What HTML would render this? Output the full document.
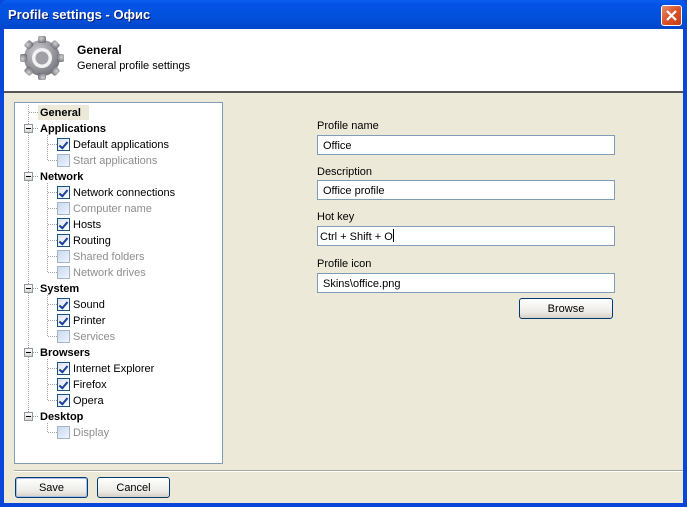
<!DOCTYPE html>
<html><head><meta charset="utf-8"><style>
*{margin:0;padding:0;box-sizing:border-box}
body{width:687px;height:507px;overflow:hidden;background:#0a46d8;font-family:"Liberation Sans",sans-serif;font-size:11px;color:#000;position:relative}
.abs{position:absolute}
#title{left:0;top:0;width:687px;height:29px;background:linear-gradient(#0a5fef,#0453e6 15%,#0350dc 60%,#0246c9);border-radius:7px 7px 0 0}
#title span{position:absolute;left:8px;top:7px;color:#fff;font-size:13px;font-weight:bold;text-shadow:1px 1px #0a1e6a}
#close{left:661px;top:5px;width:21px;height:21px;border:1px solid #fff;border-radius:3px;background:linear-gradient(135deg,#e88b6c,#d9532b 50%,#c43c14)}
#client{left:4px;top:29px;width:679px;height:474px;background:#ece9d8}
#hdr{left:4px;top:29px;width:679px;height:64px;background:#fff;border-bottom:2px solid #555}
.t{position:absolute;white-space:nowrap;line-height:14px;margin-top:1px}
.tree{left:14px;top:102px;width:209px;height:362px;background:#fff;border:1px solid #7f9db9}
.row{position:absolute;height:14px;line-height:14px;white-space:nowrap;margin-top:1px}
.b{font-weight:bold}
.g{color:#8d8d8d}
.exp{position:absolute;width:9px;height:9px;border:1px solid #8c99a8;background:linear-gradient(#fff,#dcd8cc)}
.exp:after{content:"";position:absolute;left:1px;top:3px;width:5px;height:1px;background:#000}
.cb{position:absolute;width:13px;height:13px;border:1px solid #1c5180;background:linear-gradient(135deg,#dce4ef,#fff)}
.cb.off{border-color:#a3b5c9;background:linear-gradient(135deg,#c8daf0,#eef4fb)}
.cb.on:after{content:"";position:absolute;left:3px;top:1px;width:3px;height:7px;border:solid #1c3f9c;border-width:0 2px 2px 0;transform:rotate(40deg)}
.dh{position:absolute;height:1px;border-top:1px dotted #a0a0a0}
.dv{position:absolute;width:1px;border-left:1px dotted #a0a0a0}
.in{position:absolute;left:317px;width:298px;height:20px;border:1px solid #7f9db9;background:#fff;padding-left:5px;padding-top:1px;line-height:18px;font-size:11px}
.btn{position:absolute;height:21px;border:1px solid #003c74;border-radius:3px;background:linear-gradient(#fff,#ecebe6 70%,#d6d0c5);text-align:center;line-height:21px}
</style></head><body>
<div id="title" class="abs"><span>Profile settings - Офис</span></div>
<div id="close" class="abs"><svg width="19" height="19"><path d="M5 5L14 14M14 5L5 14" stroke="#fff" stroke-width="2.2"/></svg></div>
<div id="client" class="abs"></div>
<div id="hdr" class="abs"></div>
<svg class="abs" style="left:18px;top:34px" width="50" height="48" viewBox="0 0 50 48">
<defs><radialGradient id="gg" cx="40%" cy="35%" r="70%"><stop offset="0" stop-color="#d0d0d4"/><stop offset="1" stop-color="#707078"/></radialGradient></defs>
<g transform="translate(24,24)">
<circle r="18" fill="url(#gg)"/>
<g fill="url(#gg)">
<rect x="-4" y="-22" width="8" height="7" rx="2"/>
<rect x="-4" y="-22" width="8" height="7" rx="2" transform="rotate(45)"/>
<rect x="-4" y="-22" width="8" height="7" rx="2" transform="rotate(90)"/>
<rect x="-4" y="-22" width="8" height="7" rx="2" transform="rotate(135)"/>
<rect x="-4" y="-22" width="8" height="7" rx="2" transform="rotate(180)"/>
<rect x="-4" y="-22" width="8" height="7" rx="2" transform="rotate(225)"/>
<rect x="-4" y="-22" width="8" height="7" rx="2" transform="rotate(270)"/>
<rect x="-4" y="-22" width="8" height="7" rx="2" transform="rotate(315)"/>
</g>
<circle r="10" fill="#f2f2f4"/><circle r="6.5" fill="#a0a0a6"/>
</g></svg>
<div class="t b" style="left:77px;top:42px;font-size:12px">General</div>
<div class="t" style="left:77px;top:58px">General profile settings</div>

<div class="abs tree"></div>
<div class="dv" style="left:28px;top:105px;height:307px"></div>
<div class="dh" style="left:29px;top:112px;width:9px"></div>
<div class="abs" style="left:38px;top:105px;width:51px;height:15px;background:#ece9d8"></div>
<div class="row b" style="left:40px;top:105px">General</div>

<div class="t" style="left:317px;top:118px">Profile name</div>
<div class="in" style="top:135px">Office</div>
<div class="t" style="left:317px;top:164px">Description</div>
<div class="in" style="top:180px">Office profile</div>
<div class="t" style="left:317px;top:209px">Hot key</div>
<div class="in" style="top:226px;padding-left:2px">Ctrl + Shift + O<span style="display:inline-block;width:1px;height:13px;background:#000;vertical-align:-2px"></span></div>
<div class="t" style="left:317px;top:256px">Profile icon</div>
<div class="in" style="top:273px">Skins\office.png</div>
<div class="btn" style="left:519px;top:298px;width:94px">Browse</div>

<div class="abs" style="left:14px;top:470px;width:669px;height:2px;border-top:1px solid #aca899;border-bottom:1px solid #fff"></div>
<div class="btn" style="left:15px;top:477px;width:73px;border-color:#003c74;box-shadow:inset 0 0 0 1px #a8c0e8">Save</div>
<div class="btn" style="left:97px;top:477px;width:73px">Cancel</div>

<div class="exp" style="left:24px;top:124px"></div><div class="dh" style="left:33px;top:128px;width:5px"></div><div class="row b" style="left:40px;top:121px">Applications</div>
<div class="dv" style="left:47px;top:135px;height:25px"></div>
<div class="dh" style="left:48px;top:144px;width:9px"></div><div class="cb on" style="left:57px;top:138px"></div><div class="row" style="left:73px;top:137px">Default applications</div>
<div class="dh" style="left:48px;top:160px;width:9px"></div><div class="cb off" style="left:57px;top:154px"></div><div class="row g" style="left:73px;top:153px">Start applications</div>

<div class="exp" style="left:24px;top:172px"></div><div class="dh" style="left:33px;top:176px;width:5px"></div><div class="row b" style="left:40px;top:169px">Network</div>
<div class="dv" style="left:47px;top:183px;height:89px"></div>
<div class="dh" style="left:48px;top:192px;width:9px"></div><div class="cb on" style="left:57px;top:186px"></div><div class="row" style="left:73px;top:185px">Network connections</div>
<div class="dh" style="left:48px;top:208px;width:9px"></div><div class="cb off" style="left:57px;top:202px"></div><div class="row g" style="left:73px;top:201px">Computer name</div>
<div class="dh" style="left:48px;top:224px;width:9px"></div><div class="cb on" style="left:57px;top:218px"></div><div class="row" style="left:73px;top:217px">Hosts</div>
<div class="dh" style="left:48px;top:240px;width:9px"></div><div class="cb on" style="left:57px;top:234px"></div><div class="row" style="left:73px;top:233px">Routing</div>
<div class="dh" style="left:48px;top:256px;width:9px"></div><div class="cb off" style="left:57px;top:250px"></div><div class="row g" style="left:73px;top:249px">Shared folders</div>
<div class="dh" style="left:48px;top:272px;width:9px"></div><div class="cb off" style="left:57px;top:266px"></div><div class="row g" style="left:73px;top:265px">Network drives</div>

<div class="exp" style="left:24px;top:284px"></div><div class="dh" style="left:33px;top:288px;width:5px"></div><div class="row b" style="left:40px;top:281px">System</div>
<div class="dv" style="left:47px;top:295px;height:41px"></div>
<div class="dh" style="left:48px;top:304px;width:9px"></div><div class="cb on" style="left:57px;top:298px"></div><div class="row" style="left:73px;top:297px">Sound</div>
<div class="dh" style="left:48px;top:320px;width:9px"></div><div class="cb on" style="left:57px;top:314px"></div><div class="row" style="left:73px;top:313px">Printer</div>
<div class="dh" style="left:48px;top:336px;width:9px"></div><div class="cb off" style="left:57px;top:330px"></div><div class="row g" style="left:73px;top:329px">Services</div>

<div class="exp" style="left:24px;top:348px"></div><div class="dh" style="left:33px;top:352px;width:5px"></div><div class="row b" style="left:40px;top:345px">Browsers</div>
<div class="dv" style="left:47px;top:359px;height:41px"></div>
<div class="dh" style="left:48px;top:368px;width:9px"></div><div class="cb on" style="left:57px;top:362px"></div><div class="row" style="left:73px;top:361px">Internet Explorer</div>
<div class="dh" style="left:48px;top:384px;width:9px"></div><div class="cb on" style="left:57px;top:378px"></div><div class="row" style="left:73px;top:377px">Firefox</div>
<div class="dh" style="left:48px;top:400px;width:9px"></div><div class="cb on" style="left:57px;top:394px"></div><div class="row" style="left:73px;top:393px">Opera</div>

<div class="exp" style="left:24px;top:412px"></div><div class="dh" style="left:33px;top:416px;width:5px"></div><div class="row b" style="left:40px;top:409px">Desktop</div>
<div class="dv" style="left:47px;top:423px;height:9px"></div>
<div class="dh" style="left:48px;top:432px;width:9px"></div><div class="cb off" style="left:57px;top:426px"></div><div class="row g" style="left:73px;top:425px">Display</div>
</body></html>
